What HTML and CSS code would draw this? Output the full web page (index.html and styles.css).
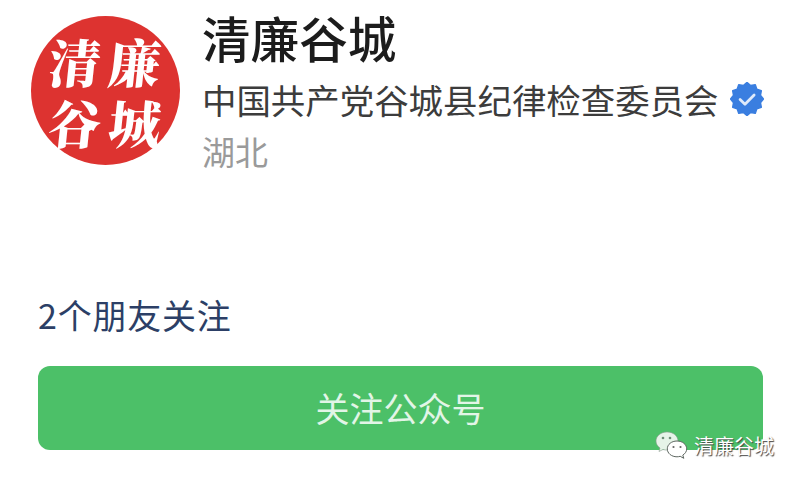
FILE: index.html
```html
<!DOCTYPE html>
<html lang="zh-CN">
<head>
    <meta charset="UTF-8">
    <title>清廉谷城</title>
    <link rel="stylesheet" href="styles.css">
</head>
<body>
    <div class="page">
        <div class="header">
            <div class="avatar">
                <span>清</span><span>廉</span>
                <span>谷</span><span>城</span>
            </div>
            <div class="info">
                <div class="name">清廉谷城</div>
                <div class="owner">
                    <span>中国共产党谷城县纪律检查委员会</span>
                    <svg class="badge" viewBox="0 0 32 32" width="34" height="34">
                        <polygon fill="#3a7ee0" stroke="#3a7ee0" stroke-width="1.5" stroke-linejoin="round" points="16,.5 19.4,3.4 23.75,2.6 25.2,6.8 29.4,8.25 28.6,12.6 31.5,16 28.6,19.4 29.4,23.75 25.2,25.2 23.75,29.4 19.4,28.6 16,31.5 12.6,28.6 8.25,29.4 6.8,25.2 2.6,23.75 3.4,19.4 .5,16 3.4,12.6 2.6,8.25 6.8,6.8 8.25,2.6 12.6,3.4"/>
                        <path d="M9.5 16.5l4.6 4.4 8.6-8.6" fill="none" stroke="#dfeafa" stroke-width="2.6" stroke-linecap="round" stroke-linejoin="round"/>
                    </svg>
                </div>
                <div class="region">湖北</div>
            </div>
        </div>
        <div class="friends">2个朋友关注</div>
        <div class="follow-btn">关注公众号</div>
    </div>

    <!-- watermark over the corner of the button -->
    <div class="watermark">
        <svg viewBox="0 0 34 30" width="34" height="30">
            <path d="M12 1C5.9 1 1 5 1 10c0 2.900 1.600 5.300 4 7l-1 3.500 4-2c1.300.4 2.600.6 4 .6 6.100 0 11-4 11-9.100S18.100 1 12 1z" fill="#e6f4e8" stroke="#8a9a8e" stroke-width=".6"/>
            <path d="M22 10c-5.500 0-9.700 3.500-9.700 7.900s4.200 7.900 9.700 7.900c1.100 0 2.200-.2 3.200-.5l3.600 2-1-3.200c2.400-1.500 3.900-3.700 3.900-6.200C31.700 13.500 27.500 10 22 10z" fill="#fff" stroke="#5d6660" stroke-width="1"/>
            <circle cx="8" cy="7" r="1.300" fill="#6f8f78"/>
            <circle cx="15" cy="7" r="1.300" fill="#6f8f78"/>
            <circle cx="18.500" cy="16" r="1.100" fill="#666"/>
            <circle cx="25.500" cy="16" r="1.100" fill="#666"/>
        </svg>
        <span>清廉谷城</span>
    </div>
</body>
</html>
```

FILE: styles.css
```css
html, body {
    margin: 0;
    background-color: #fff;
}
body {
    font-family: "Noto Sans CJK SC", "Noto Sans", sans-serif;
    width: 800px;
    height: 482px;
    position: relative;
    overflow: hidden;
}
.header {
    display: flex;
    gap: 22px;
    padding: 16px 0 0 31px;
}
.avatar {
    width: 149px;
    height: 149px;
    flex-shrink: 0;
    border-radius: 50%;
    background-color: #dd3330;
    display: grid;
    grid-template-columns: 1fr 1fr;
    place-items: center;
    padding: 15px 15px 13px 14px;
    box-sizing: border-box;
    color: #fff;
    font-family: "Noto Serif CJK SC", "Noto Sans CJK SC", sans-serif;
    font-size: 52px;
    font-weight: 900;
    line-height: 1;
}
.avatar span {
    transform: skewX(-6deg);
}
.info {
    margin-top: -11px;
}
.name {
    font-size: 48.600px;
    font-weight: 500;
    line-height: 64px;
    color: #1c1c1c;
}
.owner {
    display: flex;
    align-items: center;
    gap: 11px;
    margin-top: 4px;
    font-size: 34.450px;
    line-height: 52px;
    color: #3c3c3c;
    white-space: nowrap;
}
.region {
    font-size: 33px;
    line-height: 52px;
    color: #9a9a9a;
}
.friends {
    margin: 116px 0 0 38px;
    font-size: 34px;
    letter-spacing: .8px;
    line-height: 44px;
    color: #2c3f66;
}
.follow-btn {
    margin: 29px 0 0 38px;
    width: 725px;
    height: 84px;
    border-radius: 12px;
    background-color: #4cc068;
    color: #e2f5e7;
    font-size: 34px;
    line-height: 84px;
    text-align: center;
}
.watermark {
    position: absolute;
    left: 655px;
    top: 431px;
    display: flex;
    align-items: center;
    gap: 5px;
    color: #fff;
    font-size: 20px;
    line-height: 30px;
    text-shadow: 1px 1px 1px #444;
}
```
